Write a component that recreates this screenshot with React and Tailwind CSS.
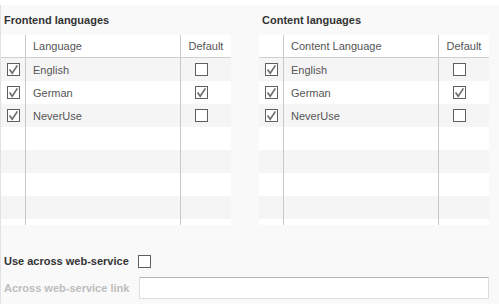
import React from 'react';

const ROWS = [
  { name: 'English', active: true, isDefault: false },
  { name: 'German', active: true, isDefault: true },
  { name: 'NeverUse', active: true, isDefault: false },
  null, null, null, null, null,
];

function Check({ checked }) {
  return (
    <span className="w-[13px] h-[13px] border border-[#5f5f5f] bg-white flex items-center justify-center shrink-0">
      {checked && (
        <svg width="11" height="11" viewBox="0 0 11 11">
          <path d="M1.6 5.6 L4.2 9.2 L9.4 1.4" fill="none" stroke="#6e6e6e" strokeWidth="1.7" strokeLinejoin="miter" />
        </svg>
      )}
    </span>
  );
}

function LangTable({ title, column }) {
  return (
    <div className="w-[230px]">
      <div className="h-[30px] flex items-center pl-[3px] font-bold text-[#333]">{title}</div>
      <div className="h-[190px] overflow-hidden bg-white">
        <div className="flex h-[23px] border-b border-[#cfcfcf] text-[#555]">
          <div className="w-[25px] border-r border-[#c8c8c8]" />
          <div className="w-[155px] border-r border-[#c8c8c8] pl-[7px] flex items-center">{column}</div>
          <div className="flex-1 flex items-center justify-center">Default</div>
        </div>
        {ROWS.map((row, i) => (
          <div key={i} className={`flex h-[23px] text-[#555] ${i % 2 === 0 ? 'bg-[#f5f5f5]' : 'bg-white'}`}>
            <div className="w-[25px] border-r border-[#c8c8c8] flex items-center pl-[6px]">
              {row && <Check checked={row.active} />}
            </div>
            <div className="w-[155px] border-r border-[#c8c8c8] pl-[7px] flex items-center">{row && row.name}</div>
            <div className="flex-1 flex items-center pl-[14px]">
              {row && <Check checked={row.isDefault} />}
            </div>
          </div>
        ))}
      </div>
    </div>
  );
}

export default function App() {
  return (
    <div className="w-[499px] h-[304px] bg-white text-[11px] leading-[14px] overflow-hidden" style={{ fontFamily: '"Liberation Sans", Arial, sans-serif' }}>
      <div className="h-[5px] bg-white" />
      <div className="h-[299px] bg-[#f9f9f9] border-l border-[#e2e2e2]">
        <div className="flex gap-[28px]">
          <LangTable title="Frontend languages" column="Language" />
          <LangTable title="Content languages" column="Content Language" />
        </div>

        <div className="pt-[25px] pl-[3px] flex flex-col gap-[5px]">
          <div className="flex items-center h-[22px]">
            <span className="w-[134px] font-bold text-[#333]">Use across web-service</span>
            <Check checked={false} />
          </div>
          <div className="flex items-center h-[22px]">
            <span className="w-[135px] font-bold text-[#bdbdbd]">Across web-service link</span>
            <div className="w-[350px] h-[22px] bg-white border border-[#dedede] border-t-[#b8b8b8]" />
          </div>
        </div>
      </div>
    </div>
  );
}
